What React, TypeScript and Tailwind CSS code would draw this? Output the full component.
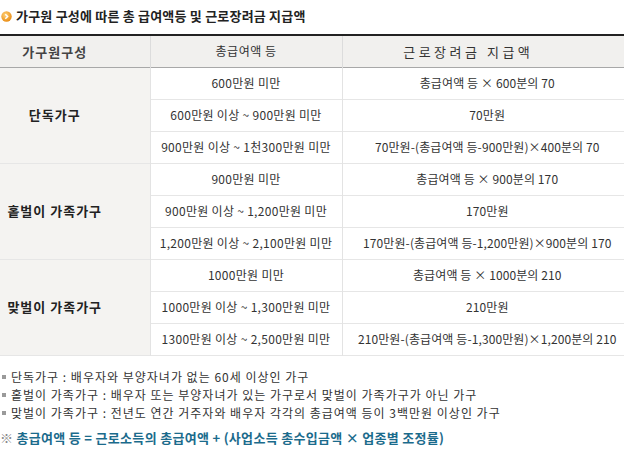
import React from "react";

const font = { fontFamily: '"Noto Sans CJK KR", "Noto Sans", sans-serif' };

type Group = { name: string; rows: [string, string][] };

const groups: Group[] = [
  {
    name: "단독가구",
    rows: [
      ["600만원 미만", "총급여액 등 × 600분의 70"],
      ["600만원 이상 ~ 900만원 미만", "70만원"],
      ["900만원 이상 ~ 1천300만원 미만", "70만원-(총급여액 등-900만원)×400분의 70"],
    ],
  },
  {
    name: "홑벌이 가족가구",
    rows: [
      ["900만원 미만", "총급여액 등 × 900분의 170"],
      ["900만원 이상 ~ 1,200만원 미만", "170만원"],
      ["1,200만원 이상 ~ 2,100만원 미만", "170만원-(총급여액 등-1,200만원)×900분의 170"],
    ],
  },
  {
    name: "맞벌이 가족가구",
    rows: [
      ["1000만원 미만", "총급여액 등 × 1000분의 210"],
      ["1000만원 이상 ~ 1,300만원 미만", "210만원"],
      ["1300만원 이상 ~ 2,500만원 미만", "210만원-(총급여액 등-1,300만원)×1,200분의 210"],
    ],
  },
];

const notes = [
  "단독가구 : 배우자와 부양자녀가 없는 60세 이상인 가구",
  "홑벌이 가족가구 : 배우자 또는 부양자녀가 있는 가구로서 맞벌이 가족가구가 아닌 가구",
  "맞벌이 가족가구 : 전년도 연간 거주자와 배우자 각각의 총급여액 등이 3백만원 이상인 가구",
];

export default function App() {
  return (
    <div className="w-[624px] h-[453px] bg-white overflow-hidden text-[#333]" style={font}>
      <div className="flex items-center h-[32px] pl-[1px] gap-[4px]">
        <svg width="11" height="11" viewBox="0 0 11 11">
          <defs>
            <radialGradient id="g" cx="40%" cy="35%" r="70%">
              <stop offset="0%" stopColor="#ffd27a" />
              <stop offset="100%" stopColor="#e8890f" />
            </radialGradient>
          </defs>
          <circle cx="5.5" cy="5.5" r="5.2" fill="url(#g)" />
          <path d="M4.3 3.2 L6.6 5.5 L4.3 7.8" stroke="#fff" strokeWidth="1.5" fill="none" />
        </svg>
        <span className="text-[13px] font-bold text-[#222] tracking-[0.2px]">
          가구원 구성에 따른 총 급여액등 및 근로장려금 지급액
        </span>
      </div>
      <div className="mt-[2px]">
        <table className="w-full border-collapse text-[12px] table-fixed tracking-[0.3px]">
          <colgroup>
            <col className="w-[150px]" />
            <col className="w-[192px]" />
            <col />
          </colgroup>
          <thead>
            <tr className="h-[32px] bg-[#f1f0ee] border-t-2 border-t-[#222] border-b border-b-[#a8a8a8]">
              <th className="font-bold text-[13px] tracking-[1px] text-[#444] text-center pr-[40px] border-r border-r-[#dcdcdc]">가구원구성</th>
              <th className="font-normal text-[12px] tracking-[0.5px] text-[#333] text-center border-r border-r-[#dcdcdc]">총급여액 등</th>
              <th className="font-normal text-[13px] tracking-[3.5px] text-[#333] text-center pr-[30px]">근로장려금 지급액</th>
            </tr>
          </thead>
          <tbody>
            {groups.map((g) =>
              g.rows.map((r, i) => (
                <tr key={g.name + i} className="h-[32px] border-b border-b-[#e6e6e6]">
                  {i === 0 && (
                    <td
                      rowSpan={3}
                      className="bg-[#f4f3f1] text-center font-bold text-[13px] tracking-[1px] text-[#222] pr-[40px] border-r border-r-[#e3e3e3]"
                    >
                      {g.name}
                    </td>
                  )}
                  <td className="text-center whitespace-nowrap border-r border-r-[#e3e3e3]">{r[0]}</td>
                  <td className="text-center whitespace-nowrap pl-[8px] tracking-[0.1px]">{r[1]}</td>
                </tr>
              ))
            )}
          </tbody>
        </table>
      </div>
      <div className="mt-[12px] flex flex-col text-[12px] tracking-[1px] text-[#333] leading-[18px]">
        {notes.map((n) => (
          <div key={n} className="flex items-center whitespace-nowrap h-[18px]">
            <span className="inline-block w-[4px] h-[4px] bg-[#9a9a9a] ml-[2px] mr-[5px]" />
            <span>{n}</span>
          </div>
        ))}
      </div>
      <div className="mt-[6px] text-[13px] tracking-[0.3px] font-bold text-[#1b6b8c] whitespace-nowrap">
        <span className="font-normal text-[#888] text-[13px]">※</span> 총급여액 등 = 근로소득의 총급여액 + (사업소득 총수입금액 × 업종별 조정률)
      </div>
    </div>
  );
}
